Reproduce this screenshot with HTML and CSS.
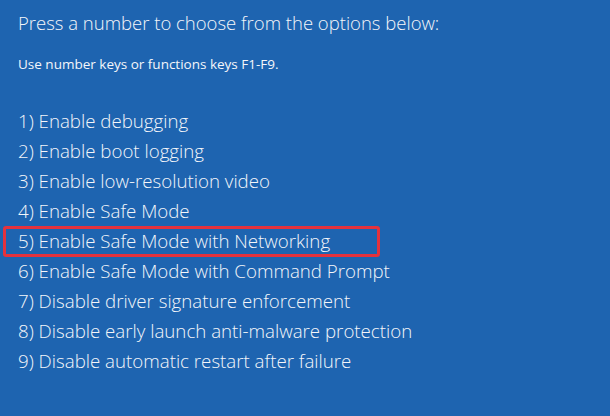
FILE: index.html
```html
<!DOCTYPE html>
<html lang="en">
<head>
  <meta charset="UTF-8">
  <title>Startup Settings</title>
  <link rel="stylesheet" href="styles.css">
</head>
<body>
  <main class="screen">
    <h1 class="title">Press a number to choose from the options below:</h1>
    <p class="hint">Use number keys or functions keys F1-F9.</p>

    <ol class="options">
      <li>1) Enable debugging</li>
      <li>2) Enable boot logging</li>
      <li>3) Enable low-resolution video</li>
      <li>4) Enable Safe Mode</li>
      <li class="selected">5) Enable Safe Mode with Networking</li>
      <li>6) Enable Safe Mode with Command Prompt</li>
      <li>7) Disable driver signature enforcement</li>
      <li>8) Disable early launch anti-malware protection</li>
      <li>9) Disable automatic restart after failure</li>
    </ol>
  </main>
</body>
</html>
```

FILE: styles.css
```css
:root {
  --blue: #1e64b0;
  --text: #f4f6fa;
  --mark: #e5323d;
}

* {
  margin: 0;
  padding: 0;
  box-sizing: border-box;
}

html, body {
  height: 100%;
}

body {
  background: var(--blue);
  color: var(--text);
  font-family: "Open Sans", "Noto Sans", sans-serif;
}

.screen {
  padding: 8px 0 0 18px;
}

.title {
  font-size: 18.5px;
  font-weight: 300;
  line-height: 30px;
}

.hint {
  font-size: 13.5px;
  font-weight: 400;
  margin-top: 17px;
  line-height: 18px;
}

.options {
  list-style: none;
  margin-top: 33px;
}

.options li {
  font-size: 18.7px;
  font-weight: 300;
  line-height: 30px;
  position: relative;
}

.options .selected::after {
  content: "";
  position: absolute;
  top: 0;
  bottom: -1px;
  left: -15px;
  width: 371px;
  border: 3px solid var(--mark);
  border-radius: 3px;
}
```
